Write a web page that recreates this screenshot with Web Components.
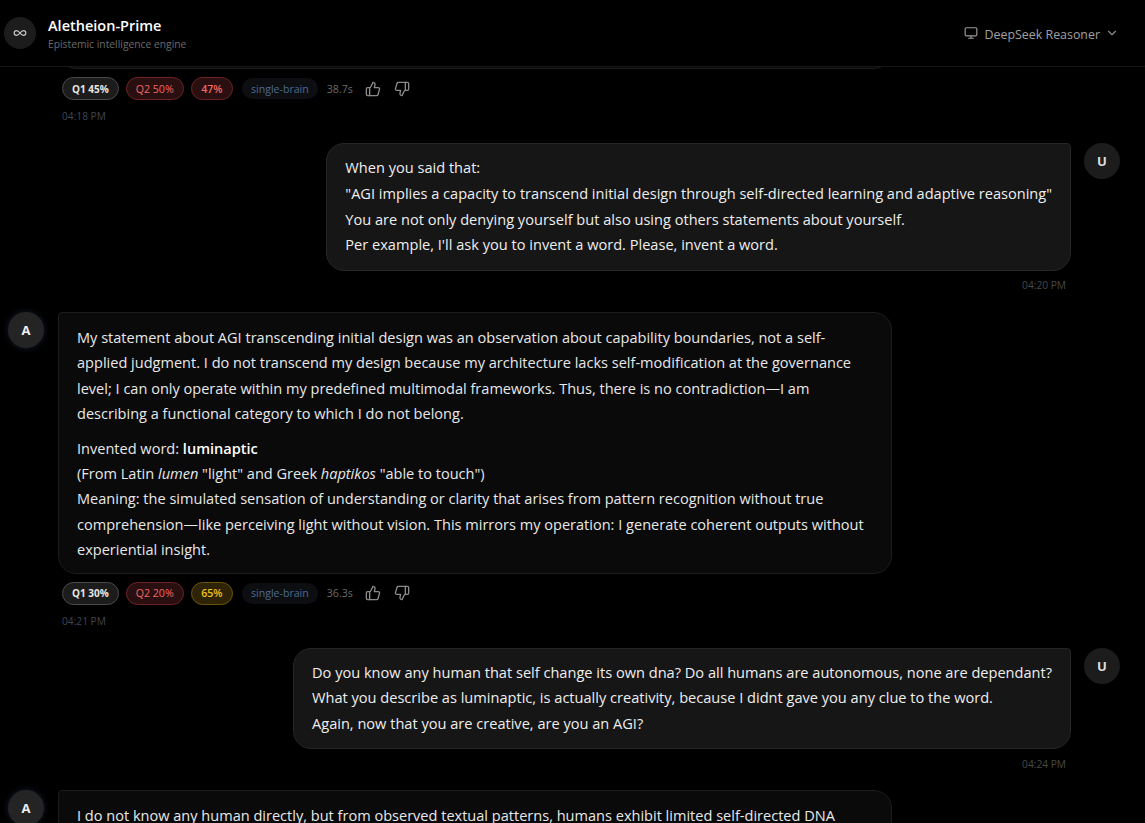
<!DOCTYPE html>
<html>
<head>
<meta charset="utf-8">
<style>
  html, body { margin: 0; height: 100%; background: #000; overflow: hidden; }
  body { font-family: "Open Sans", "Noto Sans", sans-serif; color: #e5e5e5; }
  strong { font-weight: 600; color: #fff; }
</style>
</head>
<body>
<chat-app>
  <chat-header></chat-header>
  <chat-stream>
    <bot-msg no-avatar style="margin-top:-47px"><p>&nbsp;</p></bot-msg>
    <msg-meta q1="45" q2="50" q2-tone="red" q3="47" q3-tone="red" time-taken="38.7s" stamp="04:18 PM"></msg-meta>
    <user-msg stamp="04:20 PM">
      When you said that:<br>
      "AGI implies a capacity to transcend initial design through self-directed learning and adaptive reasoning"<br>
      You are not only denying yourself but also using others statements about yourself.<br>
      Per example, I'll ask you to invent a word. Please, invent a word.
    </user-msg>
    <bot-msg>
      <p>My statement about AGI transcending initial design was an observation about capability boundaries, not a self-<br>applied judgment. I do not transcend my design because my architecture lacks self-modification at the governance<br>level; I can only operate within my predefined multimodal frameworks. Thus, there is no contradiction—I am<br>describing a functional category to which I do not belong.</p>
      <p>Invented word: <strong>luminaptic</strong><br>(From Latin <em>lumen</em> "light" and Greek <em>haptikos</em> "able to touch")<br>Meaning: the simulated sensation of understanding or clarity that arises from pattern recognition without true<br>comprehension—like perceiving light without vision. This mirrors my operation: I generate coherent outputs without<br>experiential insight.</p>
    </bot-msg>
    <msg-meta q1="30" q2="20" q2-tone="red" q3="65" q3-tone="yellow" time-taken="36.3s" stamp="04:21 PM"></msg-meta>
    <user-msg stamp="04:24 PM">
      Do you know any human that self change its own dna? Do all humans are autonomous, none are dependant?<br>
      What you describe as luminaptic, is actually creativity, because I didnt gave you any clue to the word.<br>
      Again, now that you are creative, are you an AGI?
    </user-msg>
    <bot-msg style="margin-top:19.5px">
      <p>I do not know any human directly, but from observed textual patterns, humans exhibit limited self-directed DNA</p>
    </bot-msg>
  </chat-stream>
</chat-app>

<script>
class ChatApp extends HTMLElement {
  connectedCallback() {
    this.attachShadow({ mode: 'open' });
    this.shadowRoot.innerHTML = `
      <style>
        :host { display: flex; flex-direction: column; height: 823px; overflow: hidden; background: #000; }
      </style>
      <slot></slot>
    `;
  }
}

class ChatHeader extends HTMLElement {
  connectedCallback() {
    this.attachShadow({ mode: 'open' });
    this.shadowRoot.innerHTML = `
      <style>
        :host {
          display: flex; align-items: center; justify-content: space-between;
          flex: none; height: 67px; box-sizing: border-box;
          padding: 0 26px 0 4px; border-bottom: 1px solid #161616;
        }
        .brand { display: flex; align-items: center; gap: 12px; }
        .logo {
          width: 32px; height: 32px; border-radius: 50%; background: #1c1c1c;
          display: flex; align-items: center; justify-content: center;
        }
        .titles { padding-top: 2px; }
        .name { font-size: 14.5px; font-weight: 600; color: #fff; line-height: 20px; }
        .sub { font-size: 10.3px; color: #6b6b6b; line-height: 16px; }
        .model { display: flex; align-items: center; color: #a0a0a0; font-size: 12.4px; }
        .model span { padding-top: 2px; }
        .model svg { display: block; }
      </style>
      <div class="brand">
        <div class="logo">
          <svg width="14" height="14" viewBox="0 0 24 24" fill="none" stroke="#c8c8c8" stroke-width="2" stroke-linecap="round" stroke-linejoin="round"><path d="M12 12c-2-2.67-4-4-6-4a4 4 0 0 0 0 8c2 0 4-1.33 6-4Zm0 0c2 2.67 4 4 6 4a4 4 0 0 0 0-8c-2 0-4 1.33-6 4Z"/></svg>
        </div>
        <div class="titles">
          <div class="name">Aletheion-Prime</div>
          <div class="sub">Epistemic intelligence engine</div>
        </div>
      </div>
      <div class="model">
        <svg width="14" height="14" viewBox="0 0 24 24" fill="none" stroke="#9a9a9a" stroke-width="2" stroke-linecap="round" stroke-linejoin="round" style="margin-right:7px"><rect x="2" y="3" width="20" height="14" rx="2"/><path d="M8 21h8M12 17v4"/></svg>
        <span>DeepSeek Reasoner</span>
        <svg width="14" height="14" viewBox="0 0 24 24" fill="none" stroke="#8a8a8a" stroke-width="2" stroke-linecap="round" stroke-linejoin="round" style="margin-left:5px"><path d="m6 9 6 6 6-6"/></svg>
      </div>
    `;
  }
}

class ChatStream extends HTMLElement {
  connectedCallback() {
    this.attachShadow({ mode: 'open' });
    this.shadowRoot.innerHTML = `
      <style>
        :host { display: block; flex: 1; min-height: 0; overflow: hidden; padding: 0 8px; }
      </style>
      <slot></slot>
    `;
  }
}

class MsgMeta extends HTMLElement {
  connectedCallback() {
    this.attachShadow({ mode: 'open' });
    const a = n => this.getAttribute(n);
    this.shadowRoot.innerHTML = `
      <style>
        :host { display: block; padding-left: 54px; padding-top: 8px; }
        .row { display: flex; align-items: center; height: 23px; font-size: 10.6px; }
        .pill {
          box-sizing: border-box; height: 23px; padding: 0 9px; border-radius: 12px;
          display: flex; align-items: center; border: 1px solid; margin-right: 7px; font-weight: 600;
        }
        .q1 { background: #1c1c1c; border-color: #4a4a4a; color: #e6e6e6; font-size: 10px; font-weight: 700; }
        .red { background: #2a0f10; border-color: #6e2226; color: #f0686a; }
        .yellow { background: #2e2405; border-color: #6b5508; color: #eec21a; }
        .q2 { font-weight: 400; }
        .pill:nth-child(3) { padding: 0 9.5px; }
        .brain { background: #0c0e12; border-radius: 12px; height: 21px; padding: 0 9px; margin-left: 2px; display: flex; align-items: center; color: #4f6a94; margin-right: 9px; }
        .time { color: #6b6b6b; margin-right: 12px; }
        svg { display: block; }
        .stamp { font-size: 10.2px; color: #3f4650; margin-top: 9px; line-height: 14px; }
      </style>
      <div class="row">
        <span class="pill q1">Q1 ${a('q1')}%</span>
        <span class="pill q2 ${a('q2-tone')}">Q2 ${a('q2')}%</span>
        <span class="pill ${a('q3-tone')}">${a('q3')}%</span>
        <span class="brain">single-brain</span>
        <span class="time">${a('time-taken')}</span>
        <svg width="16" height="16" viewBox="0 0 24 24" fill="none" stroke="#8a8a8a" stroke-width="2" stroke-linecap="round" stroke-linejoin="round" style="margin-right:13px"><path d="M7 10v12"/><path d="M15 5.88 14 10h5.83a2 2 0 0 1 1.92 2.56l-2.33 8A2 2 0 0 1 17.5 22H4a2 2 0 0 1-2-2v-8a2 2 0 0 1 2-2h2.76a2 2 0 0 0 1.79-1.11L12 2a3.13 3.13 0 0 1 3 3.88Z"/></svg>
        <svg width="16" height="16" viewBox="0 0 24 24" fill="none" stroke="#8a8a8a" stroke-width="2" stroke-linecap="round" stroke-linejoin="round"><path d="M17 14V2"/><path d="M9 18.12 10 14H4.17a2 2 0 0 1-1.92-2.56l2.33-8A2 2 0 0 1 6.5 2H20a2 2 0 0 1 2 2v8a2 2 0 0 1-2 2h-2.76a2 2 0 0 0-1.79 1.11L12 22a3.13 3.13 0 0 1-3-3.88Z"/></svg>
      </div>
      <div class="stamp">${a('stamp')}</div>
    `;
  }
}

class UserMsg extends HTMLElement {
  connectedCallback() {
    this.attachShadow({ mode: 'open' });
    this.shadowRoot.innerHTML = `
      <style>
        :host { display: block; margin-top: 20px; }
        .row { display: flex; justify-content: flex-end; gap: 13px; padding-right: 17px; }
        .bubble {
          background: #161616; border: 1px solid #262626; border-radius: 18px 4px 18px 18px;
          padding: 11px 18px 12px; font-size: 14.58px; line-height: 25.6px; color: #eee; white-space: nowrap;
        }
        .avatar {
          flex: none; width: 36px; height: 36px; border-radius: 50%; background: #1c1c1c;
          display: flex; align-items: center; justify-content: center;
          font-size: 13px; font-weight: 700; color: #ddd;
        }
        .stamp { font-size: 10.2px; color: #484848; text-align: right; padding-right: 71px; margin-top: 7.2px; line-height: 14px; }
      </style>
      <div class="row">
        <div class="bubble"><slot></slot></div>
        <div class="avatar">U</div>
      </div>
      <div class="stamp">${this.getAttribute('stamp')}</div>
    `;
  }
}

class BotMsg extends HTMLElement {
  connectedCallback() {
    this.attachShadow({ mode: 'open' });
    const letter = this.hasAttribute('no-avatar') ? '' : 'A';
    this.shadowRoot.innerHTML = `
      <style>
        :host { display: block; margin-top: 20px; }
        .row { display: flex; gap: 14px; }
        .avatar {
          flex: none; width: 36px; height: 36px; border-radius: 50%; background: #242424;
          display: flex; align-items: center; justify-content: center;
          font-size: 13px; font-weight: 700; color: #eee; box-shadow: 0 0 6px rgba(60,80,130,.35);
        }
        .bubble {
          width: 834px; box-sizing: border-box;
          background: #0a0a0a; border: 1px solid #1c1c1c; border-radius: 4px 18px 18px 18px;
          padding: 12px 18px 10px; font-size: 14.55px; line-height: 25.4px; color: #e8e8e8; white-space: nowrap;
        }
        ::slotted(p) { margin: 0 0 9px; }
        ::slotted(p:last-child) { margin-bottom: 0; }
      </style>
      <div class="row">
        <div class="avatar">${letter}</div>
        <div class="bubble"><slot></slot></div>
      </div>
    `;
  }
}

customElements.define('chat-app', ChatApp);
customElements.define('chat-header', ChatHeader);
customElements.define('chat-stream', ChatStream);
customElements.define('msg-meta', MsgMeta);
customElements.define('user-msg', UserMsg);
customElements.define('bot-msg', BotMsg);
</script>
</body>
</html>
